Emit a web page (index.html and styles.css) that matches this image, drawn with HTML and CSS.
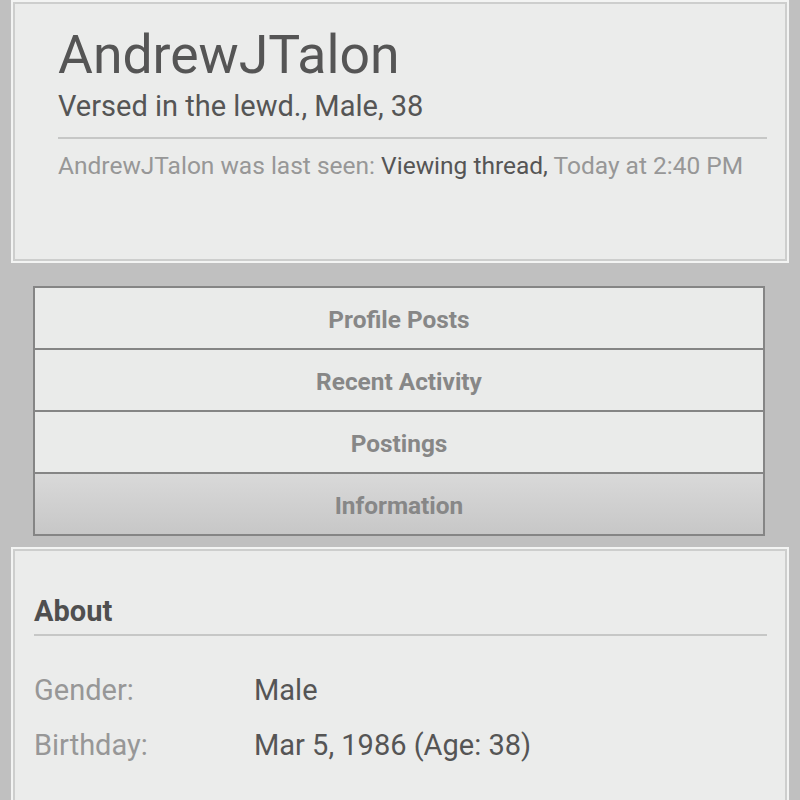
FILE: index.html
```html
<!DOCTYPE html>
<html>
<head>
<meta charset="utf-8">
<link rel="stylesheet" href="styles.css">
</head>
<body>
<div class="page">
  <section class="panel header-panel">
    <h1 class="username">AndrewJTalon</h1>
    <div class="usertitle">Versed in the lewd., Male, 38</div>
    <div class="lastseen">AndrewJTalon was last seen: <span class="activity">Viewing thread,</span> Today at 2:40 PM</div>
  </section>

  <nav class="tabs">
    <div class="tab">Profile Posts</div>
    <div class="tab">Recent Activity</div>
    <div class="tab">Postings</div>
    <div class="tab active">Information</div>
  </nav>

  <section class="panel info-panel">
    <h2 class="section-title">About</h2>
    <dl class="pairs">
      <dt>Gender:</dt><dd>Male</dd>
      <dt>Birthday:</dt><dd>Mar 5, 1986 (Age: 38)</dd>
    </dl>
  </section>
</div>
</body>
</html>
```

FILE: styles.css
```css
html, body {
  margin: 0;
  padding: 0;
}
body {
  background: #c0c0c0;
  font-family: Roboto, "Noto Sans", "Liberation Sans", sans-serif;
  width: 800px;
  height: 800px;
  overflow: hidden;
}
.page {
  display: flex;
  flex-direction: column;
}
.panel {
  margin: 0 11px;
  background: #ebeceb;
  border: 2px solid #f3f4f3;
  box-shadow: inset 0 0 0 2px #cdcecd;
}
.header-panel {
  box-sizing: border-box;
  height: 263px;
  padding: 19px 20px 0 45px;
}
.username {
  margin: 0;
  font-size: 53.5px;
  font-weight: 400;
  line-height: 67px;
  color: #555;
}
.usertitle {
  font-size: 29px;
  line-height: 36px;
  color: #555;
  padding-bottom: 13px;
  border-bottom: 2px solid #c6c7c6;
}
.lastseen {
  margin-top: 11px;
  font-size: 24.5px;
  line-height: 32px;
  color: #979797;
}
.activity {
  color: #555;
}
.tabs {
  margin: 23px 35px 11px 33px;
  border: 2px solid #858585;
  display: flex;
  flex-direction: column;
}
.tab {
  box-sizing: border-box;
  height: 60px;
  padding-top: 2px;
  display: flex;
  align-items: center;
  justify-content: center;
  font-size: 24.4px;
  font-weight: 700;
  color: #878787;
  background: #eaebea;
  border-top: 2px solid #858585;
}
.tab:first-child {
  border-top: none;
  height: 60px;
}
.tab + .tab {
  height: 62px;
}
.tab.active {
  background: linear-gradient(to bottom, #d9d9d9, #c7c7c7);
}
.info-panel {
  box-sizing: border-box;
  padding: 42px 20px 0 21px;
  height: 260px;
}
.section-title {
  margin: 0;
  font-size: 29px;
  font-weight: 700;
  color: #4f4f4f;
  line-height: 40px;
  padding-bottom: 3px;
  border-bottom: 2px solid #c6c7c6;
}
.pairs {
  margin: 37px 0 0;
  display: grid;
  grid-template-columns: 220px 1fr;
  row-gap: 21px;
  font-size: 29px;
  line-height: 34px;
}
.pairs dt {
  color: #979797;
}
.pairs dd {
  margin: 0;
  color: #555;
}
```
